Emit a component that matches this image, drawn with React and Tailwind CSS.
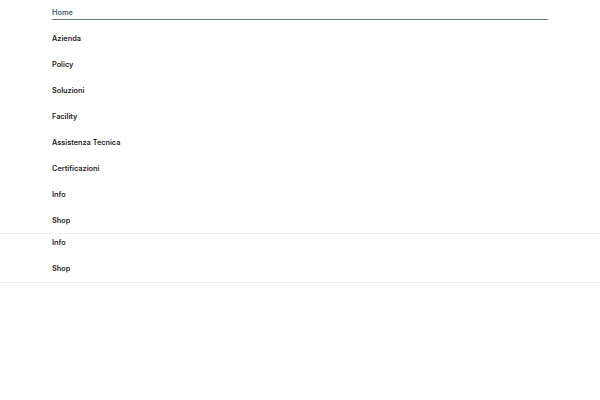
export default function App() {
  const items = ["Azienda", "Policy", "Soluzioni", "Facility", "Assistenza Tecnica", "Certificazioni", "Info", "Shop"];
  const font = { fontFamily: '"Inter", "Open Sans", sans-serif' };
  return (
    <div className="w-[600px] h-[400px] bg-white overflow-hidden" style={font}>
      <div className="px-[52px]">
        <div className="h-[20px] flex items-end border-b-[1.5px] border-[#66747e]">
          <span className="text-[7.3px] font-semibold text-[#3f5c75] leading-none pb-[3px]">Home</span>
        </div>
        <div className="flex flex-col mt-[6px]">
          {items.map((t) => (
            <div key={t} className="h-[26px] flex items-center text-[7.3px] font-semibold text-[#1f2327] leading-none">
              {t}
            </div>
          ))}
        </div>
      </div>
      <div className="-mt-px border-t border-b border-[#eeeeee] h-[50px]">
        <div className="px-[52px] flex flex-col -mt-[4px]">
          {["Info", "Shop"].map((t) => (
            <div key={t} className="h-[26px] flex items-center text-[7.3px] font-semibold text-[#1f2327] leading-none">
              {t}
            </div>
          ))}
        </div>
      </div>
    </div>
  );
}
